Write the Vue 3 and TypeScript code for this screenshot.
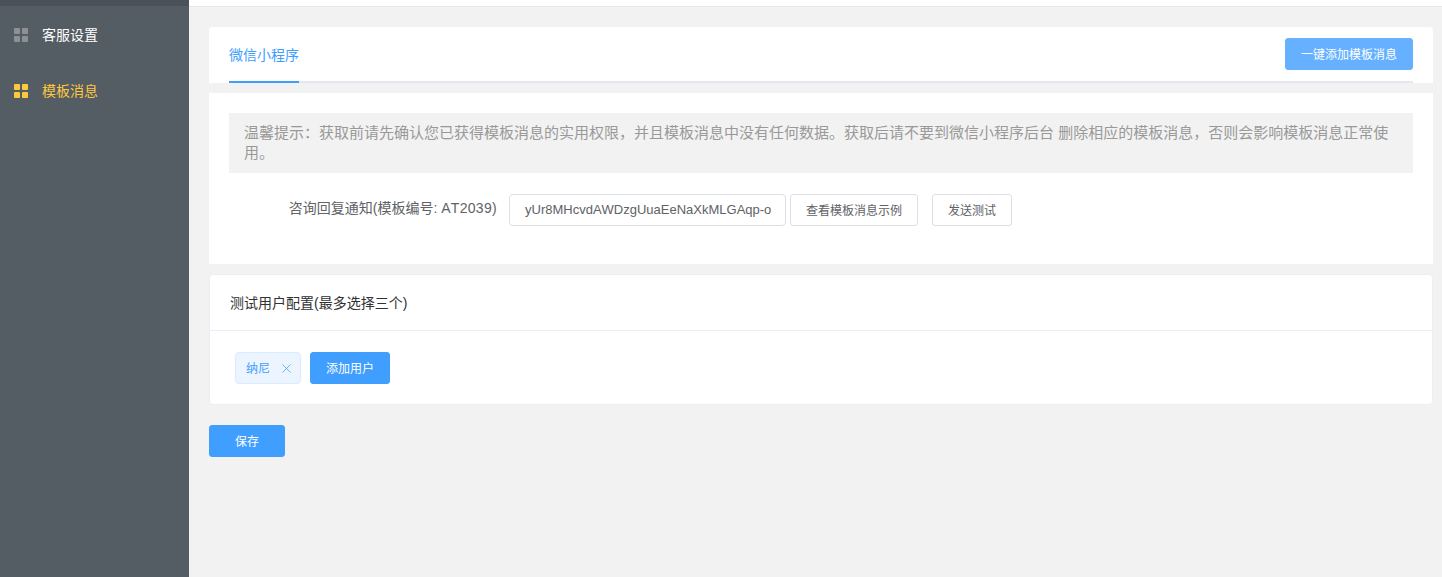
<script setup lang="ts">
interface MenuItem { label: string; active: boolean }
const menu: MenuItem[] = [
  { label: '客服设置', active: false },
  { label: '模板消息', active: true },
]
</script>

<template>
  <div class="page">
    <aside class="sidebar">
      <div class="side-top"></div>
      <div v-for="m in menu" :key="m.label" class="menu-item" :class="{ active: m.active }">
        <span class="grid-icon"><i></i><i></i><i></i><i></i></span>
        <span class="menu-text">{{ m.label }}</span>
      </div>
    </aside>
    <main class="main">
      <div class="topbar"></div>
      <div class="content">
        <section class="tabs-card">
          <div class="tabs-row">
            <div class="tab">微信小程序</div>
            <button class="btn primary light">一键添加模板消息</button>
          </div>
        </section>
        <section class="tpl-card">
          <div class="notice">温馨提示：获取前请先确认您已获得模板消息的实用权限，并且模板消息中没有任何数据。获取后请不要到微信小程序后台 删除相应的模板消息，否则会影响模板消息正常使用。</div>
          <div class="form-row">
            <label class="form-label">咨询回复通知(模板编号: <span class="code">AT2039)</span></label>
            <div class="input">yUr8MHcvdAWDzgUuaEeNaXkMLGAqp-o</div>
            <button class="btn plain example">查看模板消息示例</button>
            <button class="btn plain send">发送测试</button>
          </div>
        </section>
        <section class="user-card">
          <div class="user-head">测试用户配置(最多选择三个)</div>
          <div class="user-body">
            <span class="tag"><span class="tag-text">纳尼</span>
              <svg class="tag-x" width="9" height="9" viewBox="0 0 9 9"><path d="M.5.5l8 8M8.5.5l-8 8" stroke="#409eff" stroke-width="1" fill="none" opacity=".75" /></svg>
            </span>
            <button class="btn primary add">添加用户</button>
          </div>
        </section>
        <button class="btn primary save">保存</button>
      </div>
    </main>
  </div>
</template>

<style>
html, body { margin: 0; padding: 0; }
</style>

<style scoped>
.page {
  display: flex;
  width: 1442px;
  height: 577px;
  overflow: hidden;
  font-family: "Liberation Sans", Arial, "Noto Sans CJK SC", sans-serif;
  font-kerning: none;
  background: #f2f2f2;
}
.sidebar {
  width: 189px;
  flex: none;
  background: #545c64;
}
.side-top { height: 6px; background: #4a5158; }
.menu-item {
  height: 56px;
  display: flex;
  align-items: center;
  padding-left: 14px;
  gap: 14px;
  font-size: 14px;
  color: #fff;
}
.menu-item.active { color: #ffc83d; }
.grid-icon {
  display: grid;
  grid-template-columns: 6px 6px;
  grid-template-rows: 6px 6px;
  gap: 2px;
  width: 14px;
  height: 14px;
  margin-top: 2px;
}
.grid-icon i { background: #8d9195; border-radius: 1px; }
.menu-item.active .grid-icon i { background: #ffc83d; }
.main { flex: 1; min-width: 0; }
.topbar { height: 6px; background: #fff; border-bottom: 1px solid #e6e6e6; }
.content { padding: 20px 9px 0 20px; }
.tabs-card {
  background: #fff;
  border-radius: 4px 4px 0 0;
  height: 56px;
  padding: 0 20px;
  box-sizing: border-box;
}
.tabs-row {
  display: flex;
  justify-content: space-between;
  height: 56px;
  border-bottom: 2px solid #e4e7ed;
  box-sizing: border-box;
}
.tab {
  height: 56px;
  width: 70px;
  line-height: 56px;
  font-size: 14px;
  color: #409eff;
  border-bottom: 2px solid #409eff;
  box-sizing: border-box;
  white-space: nowrap;
}
.btn {
  box-sizing: border-box;
  height: 32px;
  border-radius: 3px;
  font-family: inherit;
  font-size: 12px;
  padding: 0 0 2px;
  white-space: nowrap;
}
.primary { background: #409eff; border: 1px solid #409eff; color: #fff; }
.light { background: #66b1ff; border-color: #66b1ff; width: 128px; margin-top: 11px; }
.tpl-card {
  background: #fff;
  margin-top: 10px;
  height: 171px;
  padding: 20px 20px 0;
  box-sizing: border-box;
}
.notice {
  background: #f2f2f2;
  color: #999;
  font-size: 15px;
  line-height: 20px;
  padding: 10px 15px;
  height: 60px;
  box-sizing: border-box;
}
.form-row {
  display: flex;
  align-items: flex-start;
  margin-top: 21px;
}
.form-label {
  width: 268px;
  text-align: right;
  box-sizing: border-box;
  font-size: 14px;
  line-height: 28px;
  color: #606266;
  white-space: nowrap;
  flex: none;
}
.code { letter-spacing: .3px; }
.input {
  box-sizing: border-box;
  width: 277px;
  height: 32px;
  margin-left: 12px;
  padding: 0 15px;
  border: 1px solid #dcdfe6;
  border-radius: 4px;
  font-size: 13px;
  line-height: 30px;
  color: #606266;
  white-space: nowrap;
  overflow: hidden;
}
.plain { background: #fff; border: 1px solid #dcdfe6; color: #606266; }
.example { width: 128px; margin-left: 4px; }
.send { width: 80px; margin-left: 14px; }
.user-card {
  background: #fff;
  border: 1px solid #ebeef5;
  border-radius: 4px;
  margin-top: 10px;
  height: 131px;
  box-sizing: border-box;
}
.user-head {
  height: 56px;
  line-height: 56px;
  padding-left: 20px;
  font-size: 14px;
  color: #303133;
  border-bottom: 1px solid #ebeef5;
  box-sizing: border-box;
}
.user-body {
  display: flex;
  align-items: flex-start;
  padding: 21px 0 0 25px;
}
.tag {
  box-sizing: border-box;
  width: 66px;
  height: 32px;
  display: flex;
  align-items: center;
  padding-left: 10px;
  font-size: 12px;
  color: #409eff;
  background: #ecf5ff;
  border: 1px solid #d9ecff;
  border-radius: 4px;
}
.tag-text { margin-bottom: 2px; }
.tag-x { margin-left: 12px; width: 9px; height: 9px; }
.add { width: 80px; margin-left: 9px; }
.save { display: block; width: 76px; margin-top: 20px; }
</style>
